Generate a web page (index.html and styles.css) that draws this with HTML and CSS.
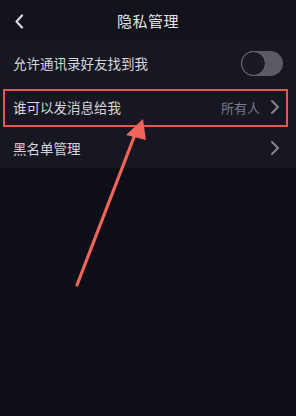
FILE: index.html
```html
<!DOCTYPE html>
<html lang="zh">
<head>
<meta charset="utf-8">
<link rel="stylesheet" href="styles.css">
</head>
<body>
<div class="screen">
  <header class="topbar">
    <svg class="back" width="10" height="15" viewBox="0 0 10 15"><path d="M8 1.5 L2.5 7.5 L8 13.5" fill="none" stroke="#d8d8de" stroke-width="2.2" stroke-linecap="round" stroke-linejoin="round"/></svg>
    <div class="title">隐私管理</div>
  </header>
  <section class="list">
    <div class="row first">
      <span class="label">允许通讯录好友找到我</span>
      <span class="toggle"><span class="knob"></span></span>
    </div>
    <div class="row mid">
      <div class="highlight"></div>
      <span class="label">谁可以发消息给我</span>
      <span class="value">所有人</span>
      <svg class="chev" width="10" height="16" viewBox="0 0 10 16"><path d="M2 2 L8 8 L2 14" fill="none" stroke="#85858f" stroke-width="2" stroke-linecap="round" stroke-linejoin="round"/></svg>
    </div>
    <div class="row last">
      <span class="label">黑名单管理</span>
      <svg class="chev" width="10" height="16" viewBox="0 0 10 16"><path d="M2 2 L8 8 L2 14" fill="none" stroke="#85858f" stroke-width="2" stroke-linecap="round" stroke-linejoin="round"/></svg>
    </div>
  </section>
  <svg class="arrow" width="296" height="416" viewBox="0 0 296 416">
    <line x1="77" y1="285" x2="136" y2="132" stroke="#f0645a" stroke-width="3.2" stroke-linecap="round"/>
    <polygon points="143,119 126,135 146,140" fill="#f0645a"/>
  </svg>
</div>
</body>
</html>
```
FILE: styles.css
```css
html, body {
  margin: 0;
  padding: 0;
  background: #0e0e19;
}
.screen {
  position: relative;
  width: 296px;
  height: 416px;
  overflow: hidden;
  background: #0e0e19;
  font-family: "Noto Sans CJK SC", "Noto Sans", sans-serif;
}
.topbar {
  position: relative;
  height: 40px;
  display: flex;
  align-items: center;
  justify-content: center;
  background: #12121c;
}
.back {
  position: absolute;
  left: 14px;
  top: 14px;
}
.title {
  color: #e6e6ea;
  font-size: 15px;
  letter-spacing: 0.5px;
}
.list {
  background: #171722;
}
.row {
  position: relative;
  display: flex;
  align-items: center;
  padding: 0 16px 0 13px;
  color: #d6d6dc;
  font-size: 13.5px;
}
.row.first { height: 46px; }
.row.mid { height: 42px; }
.row.last { height: 40px; }
.label { flex: 1; }
.value {
  color: #7c7c86;
  font-size: 13px;
  margin-right: 10px;
}
.toggle {
  position: relative;
  width: 42px;
  height: 25px;
  border-radius: 13px;
  background: #5a5a64;
  margin-right: -3px;
}
.knob {
  position: absolute;
  left: 0;
  top: 0;
  width: 23px;
  height: 23px;
  border-radius: 50%;
  background: #1a1a24;
  border: 1px solid #6e6e78;
}
.highlight {
  position: absolute;
  left: 3px;
  right: 8px;
  top: 3px;
  bottom: 1px;
  border: 2px solid #e8574f;
}
.arrow {
  position: absolute;
  left: 0;
  top: 0;
}
```
